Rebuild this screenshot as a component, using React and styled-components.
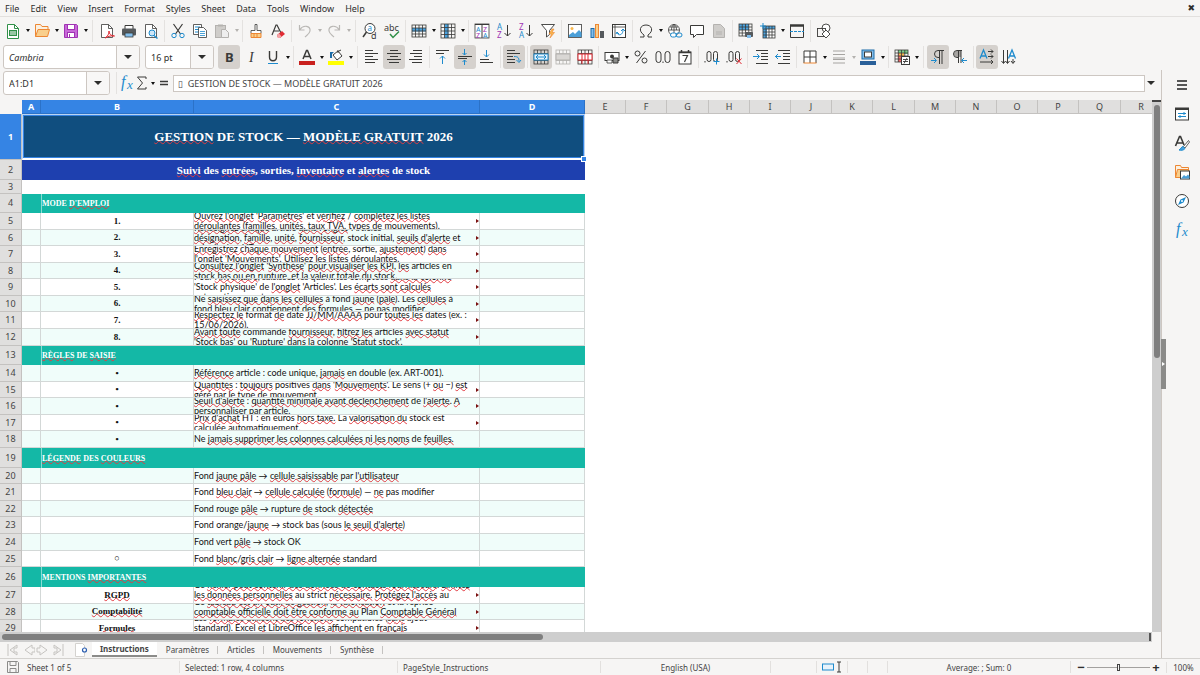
import React, { useState } from 'react'
import styled, { createGlobalStyle, css } from 'styled-components'

const DARK = '#3a3a38'
const BLUE = '#1e8bcd'
const ORANGE = '#ed8733'
const RED = '#e02b33'
const PURPLE = '#a033b3'
const GREEN = '#309048'

const menus = ['File', 'Edit', 'View', 'Insert', 'Format', 'Styles', 'Sheet', 'Data', 'Tools', 'Window', 'Help']

// text between ~ signs is flagged by the spell checker
const rows = [
  { n: 1, h: 46, kind: 'title', text: '~GESTION~ DE STOCK — ~MODÈLE GRATUIT~ 2026' },
  { n: 2, h: 20, kind: 'subtitle', text: '~Suivi~ des ~entrées~, sorties, ~inventaire~ et ~alertes~ de stock' },
  { n: 3, h: 14, kind: 'empty' },
  { n: 4, h: 19, kind: 'section', text: "MODE ~D'EMPLOI~" },
  { n: 5, h: 17, label: '1.', more: true, lines: ["~Ouvrez l'onglet~ '~Paramètres~' et ~vérifiez~ / ~complétez les listes~", '~déroulantes~ (~familles~, ~unités~, ~taux TVA~, ~types~ de ~mouvements~).'] },
  { n: 6, h: 16, label: '2.', more: true, lines: ["~Renseignez chaque~ article ~dans l'onglet~ 'Articles'", "~désignation~, ~famille~, ~unité~, ~fournisseur~, stock initial, ~seuils d'alerte~ et", "prix d'achat HT."] },
  { n: 7, h: 17, label: '3.', more: true, lines: ['~Enregistrez chaque mouvement~ (~entrée~, sortie, ~ajustement~) ~dans~', "~l'onglet~ '~Mouvements~'. ~Utilisez~ les ~listes déroulantes.~"] },
  { n: 8, h: 16, label: '4.', more: true, lines: ["~Consultez l'onglet~ '~Synthèse~' ~pour visualiser les KPI~, ~les~ articles en", 'stock ~bas ou~ en ~rupture~, et ~la valeur totale~ du stock.'] },
  { n: 9, h: 17, label: '5.', more: true, lines: ["Pour ~l'inventaire~, saisissez les quantités comptées ~dans la colonne~", "'Stock physique' de ~l'onglet~ 'Articles'. Les ~écarts sont calculés~", 'automatiquement.'] },
  { n: 10, h: 16, label: '6.', more: true, lines: ['Ne ~saisissez que dans les cellules~ à fond ~jaune~ (~pâle~). Les ~cellules~ à', 'fond bleu ~clair contiennent~ des ~formules~ — ne pas modifier.'] },
  { n: 11, h: 17, label: '7.', more: true, lines: ['~Respectez le~ format ~de~ date ~JJ/MM/AAAA~ pour ~toutes les~ dates (ex. :', '15/06/2026).'] },
  { n: 12, h: 17, label: '8.', more: true, lines: ['~Avant toute~ commande ~fournisseur~, ~filtrez les~ articles ~avec statut~', "'Stock bas' ~ou~ '~Rupture~' dans la ~colonne~ '~Statut~ stock'."] },
  { n: 13, h: 19, kind: 'section', text: '~RÈGLES~ DE ~SAISIE~' },
  { n: 14, h: 17, label: '•', lines: ['~Référence~ article : code unique, ~jamais~ en double (ex. ART-001).'] },
  { n: 15, h: 16, label: '•', more: true, lines: ["~Quantités~ : ~toujours~ positives ~dans~ '~Mouvements~'. Le sens (+ ~ou~ −) ~est~", '~géré~ par le type de ~mouvement.~'] },
  { n: 16, h: 17, label: '•', more: true, lines: ["~Seuil d'alerte~ : ~quantité minimale avant déclenchement~ de ~l'alerte~. ~À~", '~personnaliser~ par article.'] },
  { n: 17, h: 16, label: '•', more: true, lines: ["~Prix d'achat~ HT : en euros ~hors taxe.~ La ~valorisation du~ stock est", '~calculée automatiquement.~'] },
  { n: 18, h: 17, label: '•', lines: ['Ne ~jamais supprimer les colonnes calculées ni les noms~ de ~feuilles.~'] },
  { n: 19, h: 20, kind: 'section', text: '~LÉGENDE~ DES ~COULEURS~' },
  { n: 20, h: 16, lines: ["Fond ~jaune pâle~ → ~cellule saisissable~ par ~l'utilisateur~"] },
  { n: 21, h: 17, lines: ['Fond ~bleu clair~ → ~cellule calculée~ (~formule~) — ~ne~ pas modifier'] },
  { n: 22, h: 16, lines: ['Fond rouge ~pâle~ → rupture ~de~ stock ~détectée~'] },
  { n: 23, h: 17, lines: ["Fond orange/~jaune~ → stock bas (sous ~le seuil d'alerte~)"] },
  { n: 24, h: 17, lines: ['Fond vert ~pâle~ → stock OK'] },
  { n: 25, h: 16, label: '○', lines: ['Fond ~blanc~/~gris clair~ → ~ligne alternée~ standard'] },
  { n: 26, h: 20, kind: 'section', text: 'MENTIONS ~IMPORTANTES~' },
  { n: 27, h: 17, label: '~RGPD~', more: true, lines: ['Ce ~fichier peut contenir des données de contacts fournisseurs~. ~Limitez~', "~les données personnelles~ au strict ~nécessaire.~ ~Protégez l'accès~ au", ' '] },
  { n: 28, h: 16, label: '~Comptabilité~', more: true, lines: ["Ce ~tableau est un outil de gestion~, ~la valorisation~ et la reprise", '~comptable officielle doit être conforme au~ Plan ~Comptable Général~', ' '] },
  { n: 29, h: 17, label: '~Formules~', more: true, lines: ["Les ~formules utilisent des fonctions~ compatibles (~sans~ ajout", 'standard). Excel ~et~ LibreOffice ~les affichent~ en ~français~', ' '] },
]

const columns = [
  ['A', 19], ['B', 153], ['C', 286], ['D', 105], ['E', 41], ['F', 41], ['G', 42], ['H', 41], ['I', 41],
  ['J', 41], ['K', 41], ['L', 42], ['M', 41], ['N', 41], ['O', 41], ['P', 41], ['Q', 42], ['R', 41],
]

const Grid = ({ x = 1, y = 2, w = 14, h = 12, c = DARK, cols = 4, lines = 4 }) => (
  <g stroke={c} fill='none' strokeWidth='.8'>
    <rect x={x} y={y} width={w} height={h} />
    {Array.from({ length: cols - 1 }, (_, i) => (
      <path key={'c' + i} d={`M${x + ((i + 1) * w) / cols} ${y}v${h}`} />
    ))}
    {Array.from({ length: lines - 1 }, (_, i) => (
      <path key={'l' + i} d={`M${x} ${y + ((i + 1) * h) / lines}h${w}`} />
    ))}
  </g>
)

const AlignLines = ({ d }) => <path d={d} stroke={DARK} fill='none' />

const glyphs = {
  new: (
    <>
      <path d='M2.500 1.500h7l4 4v10h-11z' fill='#fff' stroke={GREEN} />
      <path d='M9.500 1.500v4h4' fill='none' stroke={GREEN} />
      <rect x='4' y='7' width='8' height='6' fill={GREEN} />
      <path d='M5 9h6M5 11h6' stroke='#fff' />
    </>
  ),
  open: (
    <>
      <path d='M1.500 13.500v-12h5l1.500 2h6v3' fill='#fbf0e0' stroke={ORANGE} />
      <path d='M1.500 13.500l2.500-7h11.500l-2 7z' fill='#f9cf8c' stroke={ORANGE} />
    </>
  ),
  save: (
    <>
      <path d='M1.500 1.500h12l1 1v12h-13z' fill='#c868d8' stroke={PURPLE} />
      <rect x='4.500' y='1.500' width='7' height='5' fill='#fff' stroke={PURPLE} />
      <rect x='4.500' y='9.500' width='7' height='5' fill='#fff' stroke={PURPLE} />
      <path d='M6.500 11v3' stroke={PURPLE} />
    </>
  ),
  pdf: (
    <>
      <path d='M2.500 1.500h7l4 4v9h-11z' fill='#fff' stroke={DARK} strokeWidth='.8' />
      <path d='M9.500 1.500v4h4' fill='none' stroke={DARK} strokeWidth='.8' />
      <path d='M6 15c3-2 4-4 4-7 0 3 2 5 5.500 5-3-.5-6 0-9.500 2z' fill='#fff' stroke={RED} />
    </>
  ),
  print: (
    <>
      <path d='M4 6V2.500h8V6' fill='#fff' stroke={DARK} />
      <rect x='1' y='5.500' width='14' height='7' rx='1' fill='#55595c' />
      <rect x='4' y='10' width='8' height='4' fill='#83beec' stroke={DARK} strokeWidth='.8' />
    </>
  ),
  preview: (
    <>
      <path d='M2.500 1.500h7l4 4v9h-11z' fill='#fff' stroke={DARK} strokeWidth='.8' />
      <path d='M9.500 1.500v4h4' fill='none' stroke={DARK} strokeWidth='.8' />
      <circle cx='9' cy='10' r='3' fill='#cfe6f7' stroke={BLUE} />
      <path d='M11 12.500l3.500 3' stroke={BLUE} strokeWidth='1.500' />
    </>
  ),
  cut: (
    <>
      <path d='M3.500 1l7 10M12.500 1l-7 10' stroke={DARK} strokeWidth='1.200' />
      <circle cx='4' cy='12.500' r='2.200' fill='none' stroke={BLUE} />
      <circle cx='12' cy='12.500' r='2.200' fill='none' stroke={BLUE} />
    </>
  ),
  copy: (
    <>
      <path d='M1.500 1.500h8v10h-8z' fill='#fff' stroke={DARK} strokeWidth='.8' />
      <path d='M3 4h5M3 6.500h4M3 9h4' stroke={BLUE} />
      <path d='M6.500 4.500h5l3 3v7h-8z' fill='#fff' stroke={DARK} strokeWidth='.8' />
      <path d='M8 8.500h5M8 10.500h5M8 12.500h5' stroke={BLUE} strokeWidth='.8' />
    </>
  ),
  paste: (
    <>
      <rect x='1.500' y='2.500' width='10' height='12' fill='#cfcdca' stroke='#b4b2af' />
      <path d='M4 3.500v-2h5v2z' fill='#b4b2af' />
      <path d='M7.500 6.500h4l3 3v5h-7z' fill='#eee' stroke='#b4b2af' />
    </>
  ),
  brush: (
    <>
      <path d='M7 1.500h2v6h4v3H3v-3h4z' fill='#fff' stroke={DARK} strokeWidth='.8' />
      <path d='M3 10.500h10v4H3z' fill='#f9cf8c' stroke={ORANGE} />
      <path d='M6 11v3M9 11v3' stroke={ORANGE} />
    </>
  ),
  clear: (
    <>
      <path d='M2 12L6 2h1l4 8M4 8h5' fill='none' stroke={DARK} strokeWidth='1.200' />
      <path d='M7 12l5-4 3 3-5 4H8z' fill={RED} />
      <path d='M7 12l2-1.500 2.500 3L10 15H8z' fill='#f4a3a6' />
    </>
  ),
  undo: <path d='M2.500 2v5h5M3 6.500c3-5 11-4 10 1.500-.5 3-3 4-5 6' fill='none' stroke='#bab8b5' strokeWidth='1.200' />,
  redo: <path d='M13.500 2v5h-5M13 6.500c-3-5-11-4-10 1.500.5 3 3 4 5 6' fill='none' stroke='#bab8b5' strokeWidth='1.200' />,
  find: (
    <>
      <circle cx='8' cy='5.500' r='5' fill='#fff' stroke={DARK} />
      <path d='M4.500 9L1 14' stroke={DARK} strokeWidth='1.500' />
      <text x='5.500' y='8' fontSize='8' fill={BLUE}>a</text>
      <text x='9' y='15.500' fontSize='9' fill={DARK}>d</text>
    </>
  ),
  spell: (
    <>
      <text x='0' y='7.500' fontSize='9' fill={DARK}>abc</text>
      <path d='M6 11l3 3.500 6-6' fill='none' stroke={GREEN} strokeWidth='1.500' />
    </>
  ),
  row: (
    <>
      <rect x='1' y='5' width='14' height='3.500' fill='#4aa3e0' />
      <Grid />
    </>
  ),
  column: (
    <>
      <rect x='4.500' y='1' width='4' height='14' fill='#4aa3e0' />
      <Grid y={1} h={14} />
    </>
  ),
  sort: (
    <>
      <rect x='1' y='1' width='14' height='14' fill='#fff' stroke={DARK} strokeWidth='.8' />
      <path d='M1 1.500h14M8 1v14' stroke={DARK} />
      <text x='2' y='8.500' fontSize='7' fill={BLUE}>A</text>
      <text x='2' y='14.500' fontSize='7' fill={PURPLE}>Z</text>
      <text x='9' y='8.500' fontSize='7' fill={PURPLE}>Z</text>
      <text x='9' y='14.500' fontSize='7' fill={BLUE}>A</text>
    </>
  ),
  asc: (
    <>
      <text x='1' y='7' fontSize='8' fill={BLUE}>A</text>
      <text x='1' y='15' fontSize='8' fill={PURPLE}>Z</text>
      <path d='M11.500 2v11M8.500 10l3 3 3-3' fill='none' stroke={DARK} />
    </>
  ),
  desc: (
    <>
      <text x='1' y='7' fontSize='8' fill={PURPLE}>Z</text>
      <text x='1' y='15' fontSize='8' fill={BLUE}>A</text>
      <path d='M11.500 2v11M8.500 10l3 3 3-3' fill='none' stroke={DARK} />
    </>
  ),
  filter: (
    <>
      <path d='M1.500 1.500h13l-5 6v4l-3 2.500v-6.500z' fill='#fff' stroke={DARK} strokeWidth='.9' />
      <path d='M12 6l-3 5h2.500l-1.500 4 4.500-5.500H12L14 6z' fill='#f9b84f' stroke={ORANGE} strokeWidth='.6' />
    </>
  ),
  image: (
    <>
      <rect x='1.500' y='1.500' width='13' height='13' fill='#fff' stroke={DARK} strokeWidth='.8' />
      <circle cx='5' cy='5.500' r='1.500' fill='#f9b84f' />
      <path d='M2 14v-2l4-3 2 2 4-4 2.500 2.500V14z' fill='#4a9fd8' />
    </>
  ),
  chart: (
    <>
      <rect x='2' y='5.500' width='3' height='9' fill='#83beec' stroke='#1c6ca8' />
      <rect x='6.500' y='1.500' width='3' height='13' fill='#f9cf8c' stroke={ORANGE} />
      <rect x='11' y='8' width='4' height='7' fill='#55595c' />
    </>
  ),
  pivot: (
    <>
      <rect x='1.500' y='1.500' width='13' height='13' fill='#fff' stroke={DARK} />
      <path d='M1.500 4h13M4 1.500v13' stroke={DARK} strokeWidth='.8' />
      <path d='M6 9c0 4 6 4 6-2M10 8l2-2 2 2M8 11l-2-2-1 2' fill='none' stroke={BLUE} />
    </>
  ),
  omega: <path d='M2 14h4v-2C0 8 2 2 8 2s8 6 2 10v2h4' fill='none' stroke={DARK} />,
  link: (
    <>
      <circle cx='7' cy='7' r='5.500' fill='#fff' stroke={DARK} strokeWidth='.8' />
      <path d='M1.500 7h11M7 1.500v11M3 4h8M4.500 7c0-3 1-5 2.500-5.500 1.500.5 2.500 2.500 2.500 5.500' fill='none' stroke={DARK} strokeWidth='.8' />
      <rect x='3.500' y='10' width='6' height='4' rx='2' fill='#fff' stroke={BLUE} />
      <rect x='9' y='10' width='6' height='4' rx='2' fill='none' stroke={BLUE} />
    </>
  ),
  comment: <path d='M1.500 2.500h13v9h-7l-3 3v-3h-3z' fill='#fff' stroke={DARK} />,
  headers: <path d='M2.500 1.500h7l4 4v9h-11zM5 9h6M5 11h6' fill='#cfcdca' stroke='#b4b2af' />,
  printarea: (
    <>
      <rect x='1' y='1' width='10' height='6' fill='#4aa3e0' />
      <Grid y={1} w={13} />
      <rect x='7' y='9' width='8' height='5' rx='1' fill='#55595c' />
      <rect x='9' y='12' width='4' height='3' fill='#83beec' />
    </>
  ),
  freeze: (
    <>
      <rect x='3' y='3' width='12' height='12' fill='#fff' />
      <path d='M3 3h12v3H7v9H3z' fill='#4aa3e0' />
      <Grid x={3} y={3} w={12} />
      <path d='M3 0v6M0 3h6' stroke={BLUE} />
    </>
  ),
  splitwin: (
    <>
      <path d='M1.500 2.500h13v12h-13z' fill='none' stroke={DARK} />
      <path d='M1 2.500h14' stroke={DARK} strokeWidth='2.500' />
      <path d='M1 8.500h14' stroke={BLUE} strokeDasharray='3 1' />
    </>
  ),
  shapes: (
    <>
      <circle cx='10' cy='5' r='4' fill='#fff' stroke={DARK} strokeWidth='.9' />
      <rect x='1.500' y='5.500' width='8' height='8' fill='none' stroke={DARK} strokeWidth='.9' />
      <path d='M10 7l4 4-4 4-4-4z' fill='#fff' stroke={DARK} strokeWidth='.9' />
    </>
  ),
  bold: <text x='4' y='13' fontSize='13' fontWeight='700' fill={DARK}>B</text>,
  italic: <text x='6' y='13' fontSize='14' fontStyle='italic' fontFamily='Liberation Serif, serif' fill={DARK}>I</text>,
  underline: (
    <>
      <path d='M4.500 2v6c0 5 7 5 7 0V2' fill='none' stroke={DARK} strokeWidth='1.400' />
      <path d='M3 14.500h10' stroke={BLUE} />
    </>
  ),
  fontcolor: (
    <>
      <path d='M4 10L7.500 1.500h1L12 10M5.500 7.500h5' fill='none' stroke={DARK} strokeWidth='1.500' />
      <rect x='0' y='12' width='16' height='4' fill='#c9211e' />
    </>
  ),
  highlight: (
    <>
      <path d='M2 3h4l-2 2v4H2z' fill='#1c6ca8' />
      <path d='M5 6l5-4 4 5-5 4z' fill='#fff' stroke={DARK} />
      <path d='M10 4V1M11 2l2-1' stroke={DARK} />
      <rect x='0' y='12' width='16' height='4' fill='#ffff00' />
    </>
  ),
  left: <AlignLines d='M1 1.500h8M1 4.500h13M1 7.500h8M1 10.500h13M1 13.500h10' />,
  center: <AlignLines d='M4 1.500h8M1 4.500h14M4 7.500h8M1 10.500h14M3 13.500h10' />,
  right: <AlignLines d='M5 1.500h9M2 4.500h12M6 7.500h8M1 10.500h13M4 13.500h10' />,
  top: (
    <>
      <AlignLines d='M1 1.500h13M1 4.500h8' />
      <path d='M7.500 15V7M5 9.500l2.500-2.500 2.500 2.500' fill='none' stroke={BLUE} />
    </>
  ),
  middle: (
    <>
      <AlignLines d='M1 7.500h14M1 9.500h9' />
      <path d='M7.500 0v6M5.500 4l2 2 2-2M7.500 16v-5M5.500 13l2-2 2 2' fill='none' stroke={BLUE} />
    </>
  ),
  bottom: (
    <>
      <AlignLines d='M1 10.500h9M1 13.500h13' />
      <path d='M7.500 1v7M5 5.500L7.500 8 10 5.500' fill='none' stroke={BLUE} />
    </>
  ),
  wrap: (
    <>
      <AlignLines d='M1 1.500h8M1 4.500h13M1 7.500h6M1 10.500h8M1 13.500h8' />
      <path d='M8 7.500c4 0 5 1 5 5M10.500 11l2.500 2.500L15 11' fill='none' stroke={BLUE} />
    </>
  ),
  merge: (
    <>
      <Grid y={1} h={14} />
      <rect x='1' y='5' width='14' height='6' fill='#e8f3fb' stroke={BLUE} />
      <path d='M3 8h10M5 6L3 8l2 2M11 6l2 2-2 2' fill='none' stroke={BLUE} />
    </>
  ),
  unmerge: (
    <>
      <Grid y={1} h={14} c='#b4b2af' />
      <rect x='1' y='5' width='14' height='6' fill='#d9d7d4' stroke='#b4b2af' />
    </>
  ),
  splitcells: (
    <>
      <Grid y={1} h={14} />
      <rect x='1' y='5' width='14' height='6' fill='#fff' stroke={RED} />
      <path d='M5 5v10M8 5v6M11 5v10' stroke={RED} />
    </>
  ),
  currency: (
    <>
      <rect x='1' y='3.500' width='14' height='8' fill='#fff' stroke={DARK} />
      <circle cx='8' cy='7.500' r='2' fill={DARK} />
      <path d='M9 9h5v5H9z' fill='#8b8b89' stroke={DARK} />
      <path d='M3 11h5v3H3z' fill='#fff' stroke={DARK} strokeWidth='.8' />
    </>
  ),
  percent: (
    <>
      <circle cx='4.500' cy='4.500' r='2.500' fill='none' stroke={DARK} />
      <circle cx='11.500' cy='11.500' r='2.500' fill='none' stroke={DARK} />
      <path d='M12.500 2l-9 12' stroke={DARK} />
    </>
  ),
  number: (
    <g fill='none' stroke={DARK}>
      <rect x='1' y='2.500' width='5' height='11' rx='2.500' />
      <rect x='10' y='2.500' width='5' height='11' rx='2.500' />
      <path d='M8 12.500v1.500' />
    </g>
  ),
  date: (
    <>
      <rect x='2' y='3' width='12' height='12' fill='#fff' stroke={DARK} />
      <path d='M2 3.500h12M4.500 1v3M11.500 1v3' stroke={DARK} strokeWidth='1.500' />
      <path d='M5.500 6.500h5l-3 6.500' fill='none' stroke={DARK} strokeWidth='1.200' />
    </>
  ),
  adddec: (
    <>
      <g fill='none' stroke={DARK}>
        <path d='M1 12v1.500' />
        <rect x='3' y='2.500' width='4' height='10' rx='2' />
        <rect x='9.500' y='2.500' width='4' height='10' rx='2' />
      </g>
      <path d='M12.500 9.500v6M9.500 12.500h6' stroke={BLUE} />
    </>
  ),
  deldec: (
    <>
      <g fill='none' stroke={DARK}>
        <path d='M1 12v1.500' />
        <rect x='3' y='2.500' width='4' height='10' rx='2' />
        <rect x='9.500' y='2.500' width='4' height='10' rx='2' />
      </g>
      <path d='M10.500 9.500l5 5.500M15.500 9.500l-5 5.500' stroke={RED} />
    </>
  ),
  indent: (
    <>
      <AlignLines d='M3 1.500h12M8 4.500h7M8 7.500h7M8 10.500h7M3 14.500h12' />
      <path d='M0 7.500h6M4 5l2.500 2.500L4 10' fill='none' stroke={BLUE} />
    </>
  ),
  outdent: (
    <>
      <AlignLines d='M3 1.500h12M8 4.500h7M8 7.500h7M8 10.500h7M3 14.500h12' />
      <path d='M0 7.500h6M3 5L.5 7.500 3 10' fill='none' stroke={BLUE} />
    </>
  ),
  borders: (
    <>
      <rect x='2' y='2' width='12' height='12' fill='#fff' />
      <path d='M2 14V2h12v12M8 2v12M2 8h12' fill='none' stroke={DARK} />
      <path d='M1.500 14h13' stroke={ORANGE} />
    </>
  ),
  borderstyle: <path d='M2 2h12M2 5.500h12M2 9h12M2 10.500h12M2 14h12' stroke='#a6a4a1' />,
  bordercolor: (
    <>
      <rect x='2' y='1' width='12' height='9' fill='#83beec' stroke='#1c6ca8' />
      <rect x='4.500' y='3' width='7' height='5' fill='#fff' stroke={DARK} />
      <rect x='0' y='12' width='16' height='4' fill='#2a6099' />
    </>
  ),
  conditional: (
    <>
      <rect x='4' y='1' width='10' height='4' fill='#7ccf8b' />
      <rect x='4' y='4' width='5' height='9' fill='#f06a6a' />
      <rect x='5' y='4' width='5' height='3' fill='#f9b84f' />
      <Grid y={1} w={13} h={12} />
      <rect x='7.500' y='7.500' width='8' height='8' fill='#fff' stroke={DARK} />
      <path d='M9 10.500h5M9 12.500h5M13 9l-3 5.500' stroke={DARK} strokeWidth='.9' />
    </>
  ),
  ltr: (
    <>
      <path d='M14 1.500H8a3.500 3.500 0 000 7h1M9.500 1.500V15M12 1.500V15' fill='none' stroke={DARK} />
      <path d='M1 11.500h5M4 9l2.500 2.500L4 14' fill='none' stroke={BLUE} />
    </>
  ),
  rtl: (
    <>
      <path d='M5 2a3 3 0 000 6h4V2z' fill='#a6a4a1' />
      <path d='M10 1.500H5a3.500 3.500 0 000 7h1M6.500 1.500V14M9 1.500V14' fill='none' stroke={DARK} />
      <path d='M15 11.500h-5M12 9l-2.500 2.500L12 14' fill='none' stroke={BLUE} />
    </>
  ),
  horizontal: (
    <>
      <path d='M1 9.500L4.500 1 8 9.500M2 7h5' fill='none' stroke={BLUE} strokeWidth='1.300' />
      <path d='M9 2.500h5M9 7.500h5M1 13h13M12 .5l2 2-2 2M12 5.500l2 2-2 2M12 11l2 2-2 2' fill='none' stroke={DARK} />
    </>
  ),
  vertical: (
    <>
      <path d='M7.500 9.500L11 1l3.500 8.500M8.500 7h5' fill='none' stroke={BLUE} strokeWidth='1.300' />
      <path d='M2.500 1v13M6.500 1v13M.5 12l2 2.500 2-2.500M4.500 12l2 2.500 2-2.500M12 10v4M10 12l2 2.500 2-2.500' fill='none' stroke={DARK} />
    </>
  ),
  fx: (
    <>
      <text x='2' y='12' fontSize='16' fontStyle='italic' fontFamily='Liberation Serif, serif' fill={BLUE}>f</text>
      <text x='8' y='14' fontSize='13' fontStyle='italic' fontFamily='Liberation Serif, serif' fill={BLUE}>x</text>
    </>
  ),
  sigma: <path d='M12 4V2H3.500l5 6-5 6H12v-2' fill='none' stroke={DARK} />,
  equals: <path d='M4 6.500h8M4 9.500h8' stroke={DARK} strokeWidth='1.400' />,
  menu: <path d='M3 4h10M3 8h10M3 12h10' stroke='#222' strokeWidth='1.300' />,
  properties: (
    <>
      <rect x='1.500' y='2' width='13' height='12' fill='#fff' stroke={DARK} />
      <path d='M1.500 3h13' stroke={DARK} strokeWidth='2' />
      <path d='M4 7.500h8M4 10.500h8M10 6v3M6 9v3' stroke={BLUE} />
    </>
  ),
  styles: (
    <>
      <path d='M1.500 11L5.500 1.500h1L10 10M3 8h6' fill='none' stroke={DARK} strokeWidth='1.600' />
      <path d='M14.500 5.500l-5 6 1.500 1.500 4.500-6z' fill='#fff' stroke={DARK} strokeWidth='.8' />
      <path d='M5 15c2-1 2-3 4-3.500l2 2C9.500 15.500 7 15.500 5 15z' fill='#4aa3e0' stroke={BLUE} />
    </>
  ),
  gallery: (
    <>
      <path d='M1.500 13.500v-12h5l1 2h7v3' fill='#fbf0e0' stroke={ORANGE} />
      <path d='M1.500 13.500l2-8h11v8z' fill='#f9cf8c' stroke={ORANGE} />
      <rect x='6.500' y='7' width='9' height='8' fill='#fff' stroke={DARK} />
      <path d='M7 14.500l3-3.500 2 1.500 2-2 1.500 2v2z' fill='#4a9fd8' />
    </>
  ),
  navigator: (
    <>
      <circle cx='8' cy='8' r='6.500' fill='#fff' stroke={DARK} />
      <path d='M12 4L9.500 9.500 4 12l2.500-5.500z' fill={BLUE} />
      <circle cx='8' cy='8' r='1' fill='#fff' />
    </>
  ),
  floppy: (
    <g fill='none' stroke='#8b8b89'>
      <path d='M2.500 2.500h10l1 1v10h-11zM5 2.500v4h6v-4M5 13.500v-4h6v4' />
    </g>
  ),
  addsheet: (
    <>
      <path d='M2.500 14.500v-13h7l2 2v11z' fill='#fff' stroke='#d4d2cf' />
      <circle cx='11.500' cy='8' r='2' fill='#fff' stroke='#2a5db0' strokeWidth='1.200' />
    </>
  ),
}

const standardBar = [
  'new+', 'open+', 'save+', '||', 'pdf', 'print', 'preview', '|', 'cut', 'copy', 'paste-', '|', 'brush', 'clear', '|',
  'undo-', 'redo-', '||', 'find', 'spell', '|', 'row+', 'column+', '|', 'sort', 'asc', 'desc', 'filter', '|', 'image',
  'chart', 'pivot', '|', 'omega+', 'link', 'comment', 'headers', '|', 'printarea', 'freeze+', 'splitwin', '|', 'shapes',
]
const formattingBar = [
  'bold*', 'italic', 'underline+', '|', 'fontcolor+', 'highlight+', '||', 'left', 'center*', 'right', '|', 'top',
  'middle*', 'bottom', '|', 'wrap*', '|', 'merge*', 'unmerge', 'splitcells', '|', 'currency+', 'percent', 'number',
  'date', '|', 'adddec', 'deldec', '|', 'indent', 'outdent', '|', 'borders+', 'borderstyle-', 'bordercolor+', '|',
  'conditional+', '||', 'ltr*', 'rtl', '|', 'horizontal*', 'vertical',
]

const Icon = ({ name }) => (
  <IconSvg viewBox='0 0 16 16' aria-hidden='true'>
    {glyphs[name]}
  </IconSvg>
)

// suffixes: + menu arrow, - disabled menu arrow, * pressed
const Tools = ({ items }) =>
  items.map((item, i) => {
    if (item === '|' || item === '||') return <Separator key={i} $wide={item === '||'} />
    const name = item.replace(/[+*-]$/, '')
    const flag = item.slice(name.length)
    return (
      <React.Fragment key={i}>
        <ToolButton type='button' aria-label={name} $pressed={flag === '*'} disabled={flag === '-'}>
          <Icon name={name} />
        </ToolButton>
        {(flag === '+' || flag === '-') && (
          <ArrowButton type='button' aria-label={name + ' menu'} disabled={flag === '-'}>
            <Arrow />
          </ArrowButton>
        )}
      </React.Fragment>
    )
  })

const Spelled = ({ text }) => text.split('~').map((part, i) => (i % 2 ? <Typo key={i}>{part}</Typo> : part))

const Row = ({ row }) => {
  const { n, h, kind, text, label = '', lines = [], more } = row
  return (
    <tr>
      <RowHead scope='row' $active={n === 1} style={{ height: h }}>
        {n}
      </RowHead>
      {kind === 'title' && (
        <TitleCell colSpan={4}>
          <Spelled text={text} />
          <FillHandle />
        </TitleCell>
      )}
      {kind === 'subtitle' && (
        <SubtitleCell colSpan={4}>
          <Spelled text={text} />
        </SubtitleCell>
      )}
      {kind === 'empty' && <EmptyCell colSpan={4} />}
      {kind === 'section' && (
        <>
          <SectionCell />
          <SectionCell colSpan={3}>
            <Spelled text={text} />
          </SectionCell>
        </>
      )}
      {!kind && (
        <>
          <Cell $even={n % 2 === 0} />
          <LabelCell $even={n % 2 === 0}>
            <Spelled text={label} />
          </LabelCell>
          <Cell $even={n % 2 === 0}>
            <Clip style={{ height: h - 1 }}>
              {lines.map((line, i) => (
                <Line key={i}>
                  <Spelled text={line} />
                </Line>
              ))}
            </Clip>
            {more && <MoreMark />}
          </Cell>
          <Cell $even={n % 2 === 0} />
        </>
      )}
      <EmptyCell colSpan={14} />
    </tr>
  )
}

const App = () => {
  const [tab, setTab] = useState('Instructions')
  const [zoom, setZoom] = useState(100)

  return (
    <>
      <GlobalStyle />
      <Window>
        <MenuBar>
          {menus.map(m => (
            <MenuItem key={m} type='button'>{m}</MenuItem>
          ))}
          <CloseButton type='button' aria-label='Close'>✖</CloseButton>
        </MenuBar>
        <Toolbar>
          <Tools items={standardBar} />
        </Toolbar>
        <FormatToolbar>
          <Combo $width={137}>
            <ComboInput aria-label='Font name' defaultValue='Cambria' $italic />
            <ComboButton type='button' aria-label='Font list'><Arrow $big /></ComboButton>
          </Combo>
          <Combo $width={69}>
            <ComboInput aria-label='Font size' defaultValue='16 pt' />
            <ComboButton type='button' aria-label='Size list'><Arrow $big /></ComboButton>
          </Combo>
          <Tools items={formattingBar} />
        </FormatToolbar>
        <Body>
          <Main>
            <FormulaBar>
              <Combo $width={107}>
                <ComboInput aria-label='Name box' defaultValue='A1:D1' />
                <ComboButton type='button' aria-label='Name list'><Arrow $big /></ComboButton>
              </Combo>
              <FormulaTools>
                <Separator />
                <SlimButton type='button' aria-label='Function wizard'><Icon name='fx' /></SlimButton>
                <SlimButton type='button' aria-label='Select function'><Icon name='sigma' /></SlimButton>
                <ArrowButton type='button' aria-label='Function menu'><Arrow /></ArrowButton>
                <SlimButton type='button' aria-label='Formula'><Icon name='equals' /></SlimButton>
              </FormulaTools>
              <FormulaInput aria-label='Input line' defaultValue='▯  GESTION DE STOCK — MODÈLE GRATUIT 2026' />
              <ExpandButton type='button' aria-label='Expand formula bar'><Arrow $big /></ExpandButton>
            </FormulaBar>
            <SheetArea>
              <SheetView>
                <SheetTable>
                  <colgroup>
                    <col style={{ width: 22 }} />
                    {columns.map(([name, width]) => (
                      <col key={name} style={{ width }} />
                    ))}
                  </colgroup>
                  <thead>
                    <tr>
                      <Corner />
                      {columns.map(([name], i) => (
                        <ColHead key={name} scope='col' $active={i < 4}>{name}</ColHead>
                      ))}
                    </tr>
                  </thead>
                  <tbody>
                    {rows.map(row => (
                      <Row key={row.n} row={row} />
                    ))}
                  </tbody>
                </SheetTable>
              </SheetView>
              <VScroll><VThumb /></VScroll>
            </SheetArea>
            <HScroll><HThumb /><HEnd /></HScroll>
            <TabBar>
              <TabNav>
                {['M2 1v12M11 2L4 7l7 5v-3H8V5h3z', 'M11 2L4 7l7 5v-3h3V5h-3z', 'M4 2l7 5-7 5V9H1V5h3z', 'M12 1v12M3 2l7 5-7 5V9h3V5H3z'].map(d => (
                  <NavButton key={d} type='button' aria-label='Scroll tabs'>
                    <svg viewBox='0 0 14 14' width='14' height='14'>
                      <path d={d} fill='none' stroke='#c6c4c1' />
                    </svg>
                  </NavButton>
                ))}
              </TabNav>
              <AddButton type='button' aria-label='Add sheet'><Icon name='addsheet' /></AddButton>
              {['Instructions', 'Paramètres', 'Articles', 'Mouvements', 'Synthèse'].map(t => (
                <Tab key={t} type='button' $active={t === tab} onClick={() => setTab(t)}>{t}</Tab>
              ))}
            </TabBar>
          </Main>
          <Sidebar>
            {['menu', 'properties', 'styles', 'gallery', 'navigator', 'fx'].map(name => (
              <ToolButton key={name} type='button' aria-label={name}><Icon name={name} /></ToolButton>
            ))}
            <SidebarHandle type='button' aria-label='Hide sidebar' />
          </Sidebar>
        </Body>
        <StatusBar>
          <Status $basis={180}>
            <Icon name='floppy' />
            <StatusText>Sheet 1 of 5</StatusText>
          </Status>
          <Status $basis={218}>Selected: 1 row, 4 columns</Status>
          <Status $basis={203}>PageStyle_Instructions</Status>
          <Status $basis={170} $center>English (USA)</Status>
          <Status $basis={46} />
          <Status $basis={31} $center>
            <svg width='20' height='14' viewBox='0 0 20 14'>
              <rect x='.5' y='4' width='11' height='6' fill='#e8f3fb' stroke={BLUE} />
              <path d='M15 2h4M17 2v10M15 12h4' stroke={DARK} fill='none' />
            </svg>
          </Status>
          <Status $basis={20} />
          <Status $basis={20} />
          <Status $basis={183} $center>Average: ; Sum: 0</Status>
          <ZoomBox>
            <ZoomButton type='button' aria-label='Zoom out' onClick={() => setZoom(zoom - 5)}>−</ZoomButton>
            <ZoomRange type='range' aria-label='Zoom' min='20' max='180' value={zoom} onChange={e => setZoom(+e.target.value)} />
            <ZoomButton type='button' aria-label='Zoom in' onClick={() => setZoom(zoom + 5)}>+</ZoomButton>
          </ZoomBox>
          <ZoomValue>{zoom}%</ZoomValue>
        </StatusBar>
      </Window>
    </>
  )
}

const GlobalStyle = createGlobalStyle`
  * { box-sizing: border-box; }
  body { margin: 0; }
  body, button, input {
    font-family: 'Noto Sans', 'Open Sans', sans-serif;
    font-size: 9px;
    color: #2e2e2d;
  }
  button {
    display: flex;
    align-items: center;
    justify-content: center;
    padding: 0;
    border: 0;
    background: none;
    flex: none;
  }
`
const Window = styled.div`
  display: flex;
  flex-direction: column;
  height: 100vh;
  overflow: hidden;
  background: #f6f5f4;
`
const MenuBar = styled.nav`
  display: flex;
  align-items: center;
  gap: 1px;
  flex: none;
  height: 17px;
  padding-right: 5px;
  border-bottom: 1px solid #e2e0de;
`
const MenuItem = styled.button`
  padding: 0 5px;
`
const CloseButton = styled.button`
  margin-left: auto;
  font-family: 'DejaVu Sans', sans-serif;
`
const Toolbar = styled.div`
  display: flex;
  align-items: center;
  flex: none;
  height: 27px;
  padding-left: 2px;
`
const FormatToolbar = styled(Toolbar)`
  height: 26px;
`
const ToolButton = styled.button`
  width: 22px;
  height: 24px;
  border-radius: 3px;
  ${p => p.$pressed && css`
    background: #d5d1cd;
  `}
`
const ArrowButton = styled.button`
  width: 7px;
  height: 24px;
  color: #111;
  &:disabled {
    color: #b4b2af;
  }
`
const Arrow = styled.span`
  border: solid transparent;
  border-width: ${p => (p.$big ? '4px 4px 0' : '3px 2px 0')};
  border-top-color: currentColor;
`
const IconSvg = styled.svg`
  display: block;
  flex: none;
  width: 16px;
  height: 16px;
  overflow: visible;
  font-family: 'Noto Sans', sans-serif;
`
const Separator = styled.span`
  flex: none;
  width: 1px;
  height: 22px;
  margin: 0 ${p => (p.$wide ? 3 : 2)}px;
  background: #e4e2e0;
`
const Combo = styled.div`
  display: flex;
  flex: none;
  width: ${p => p.$width}px;
  height: 24px;
  margin: 0 4px 0 1px;
  border: 1px solid #cdc7c2;
  border-radius: 3px;
  background: #fff;
  overflow: hidden;
`
const ComboInput = styled.input`
  flex: 1;
  min-width: 0;
  padding: 0 5px;
  border: 0;
  background: none;
  outline: none;
  font-style: ${p => (p.$italic ? 'italic' : 'normal')};
`
const ComboButton = styled.button`
  width: 23px;
  border-left: 1px solid #cdc7c2;
  background: #f8f7f6;
`
const Body = styled.div`
  display: flex;
  flex: 1;
  min-height: 0;
`
const Main = styled.div`
  display: flex;
  flex-direction: column;
  flex: 1;
  min-width: 0;
`
const FormulaBar = styled.div`
  display: flex;
  align-items: center;
  flex: none;
  height: 30px;
  padding: 0 4px 4px 2px;
`
const FormulaTools = styled.div`
  display: flex;
  flex: none;
  align-items: center;
  width: 59px;
`
const SlimButton = styled.button`
  width: 15px;
  height: 24px;
`
const FormulaInput = styled.input`
  flex: 1;
  min-width: 0;
  height: 17px;
  padding: 0 4px;
  border: 1px solid #cdc7c2;
  outline: none;
  color: #444;
`
const ExpandButton = styled.button`
  width: 12px;
`
const SheetArea = styled.div`
  display: flex;
  flex: 1;
  min-height: 0;
`
const SheetView = styled.div`
  flex: 1;
  min-width: 0;
  overflow: hidden;
  background: #fff;
`
const SheetTable = styled.table`
  table-layout: fixed;
  width: 0;
  border-spacing: 0;
  line-height: 10px;
  th, td {
    padding: 0;
  }
`
const Corner = styled.td`
  height: 14px;
  background: #f6f5f4;
`
const ColHead = styled.th`
  height: 14px;
  border-right: 1px solid ${p => (p.$active ? '#2b72c8' : '#c4c2c0')};
  border-bottom: 1px solid ${p => (p.$active ? '#2b72c8' : '#c4c2c0')};
  background: ${p => (p.$active ? '#3584e4' : '#e0dfde')};
  color: ${p => (p.$active ? '#fff' : '#444')};
  font-size: 9px;
  font-weight: ${p => (p.$active ? 700 : 400)};
`
const RowHead = styled.th`
  border-right: 1px solid #c4c2c0;
  border-bottom: 1px solid #c4c2c0;
  background: ${p => (p.$active ? '#3584e4' : '#e0dfde')};
  color: ${p => (p.$active ? '#fff' : '#444')};
  font-size: 9px;
  font-weight: ${p => (p.$active ? 700 : 400)};
`
const serif = "'Liberation Serif', serif"
const TitleCell = styled.td`
  position: relative;
  border: 1px solid #b9d4f3;
  border-bottom: 2px solid #fff;
  background: #104e7f;
  box-shadow: inset 0 0 0 1px #3584e4;
  color: #fff;
  text-align: center;
  font: bold 13px/18px ${serif};
`
const FillHandle = styled.span`
  position: absolute;
  right: -2px;
  bottom: -3px;
  width: 4px;
  height: 4px;
  background: #3584e4;
  box-shadow: 0 0 0 1px #fff;
`
const SubtitleCell = styled.td`
  background: #1e40af;
  color: #fff;
  text-align: center;
  font: bold 11px/12px ${serif};
`
const EmptyCell = styled.td`
  background: #fff;
`
const SectionCell = styled.td`
  background: #14b8a6;
  color: #fff;
  font: bold 8px/11px ${serif};
  & + & {
    border-left: 1px solid #8adbd2;
  }
`
const Cell = styled.td`
  position: relative;
  border-right: 1px solid #d3d8d7;
  border-bottom: 1px solid #d3d8d7;
  background: ${p => (p.$even ? '#f0fdfa' : '#fff')};
  color: #111;
`
const LabelCell = styled(Cell)`
  text-align: center;
  font: bold 9px/11px ${serif};
`
const Clip = styled.div`
  display: flex;
  flex-direction: column;
  justify-content: center;
  overflow: hidden;
`
const Line = styled.div`
  flex: none;
  height: 10px;
  font: 9px/10px Lato, sans-serif;
  white-space: pre;
`
const Typo = styled.span`
  text-decoration: underline wavy #e23b42 1px;
  text-decoration-skip-ink: none;
  text-underline-offset: -1px;
`
const MoreMark = styled.span`
  position: absolute;
  right: 0;
  top: 6px;
  border: solid transparent;
  border-width: 2px 0 2px 3px;
  border-left-color: #7a1010;
`
const VScroll = styled.div`
  flex: none;
  width: 9px;
  padding: 3px 1px 0 2px;
  border-top: 2px solid #444;
  background: #cecece;
`
const VThumb = styled.div`
  height: 48%;
  border-radius: 3px;
  background: #7f7f7f;
`
const HScroll = styled.div`
  display: flex;
  align-items: center;
  flex: none;
  height: 10px;
  margin-right: 9px;
  padding-left: 2px;
  background: #cecece;
`
const HThumb = styled.div`
  width: 47%;
  height: 6px;
  border-radius: 3px;
  background: #7f7f7f;
`
const HEnd = styled.div`
  width: 2px;
  height: 8px;
  margin: 0 1px 0 auto;
  background: #555;
`
const TabBar = styled.div`
  display: flex;
  flex: none;
  height: 16px;
`
const TabNav = styled.div`
  display: flex;
  padding: 0 5px;
`
const NavButton = styled.button`
  width: 15px;
`
const AddButton = styled.button`
  width: 22px;
`
const Tab = styled.button`
  position: relative;
  height: 15px;
  padding: 0 9px;
  font-size: 8px;
  color: #444;
  ${p => p.$active
    ? css`
        padding: 0 8px;
        border-bottom: 2px solid #8b8b89;
        background: #fff;
        font-weight: 700;
      `
    : css`
        &::after {
          content: '';
          position: absolute;
          right: 0;
          top: 4px;
          height: 8px;
          border-right: 1px solid #c4c2c0;
        }
      `}
`
const Sidebar = styled.aside`
  position: relative;
  display: flex;
  flex-direction: column;
  align-items: center;
  gap: 5px;
  flex: none;
  width: 39px;
  padding: 3px 0 0 2px;
  border-left: 1px solid #cdc7c2;
`
const SidebarHandle = styled.button`
  position: absolute;
  left: -1px;
  top: 50%;
  width: 5px;
  height: 50px;
  margin-top: -25px;
  background: #8b8b89;
  &::after {
    content: '';
    border: solid transparent;
    border-width: 2px 0 2px 3px;
    border-left-color: #fff;
  }
`
const StatusBar = styled.footer`
  display: flex;
  align-items: center;
  flex: none;
  height: 17px;
  border-top: 1px solid #d4d2cf;
  font-size: 8px;
  color: #444;
`
const Status = styled.div`
  display: flex;
  align-items: center;
  justify-content: ${p => (p.$center ? 'center' : 'flex-start')};
  flex: ${p => `${p.$basis} 1 ${p.$basis}px`};
  min-width: 0;
  height: 12px;
  padding: 0 5px;
  border-right: 1px solid #e2e0de;
  white-space: nowrap;
`
const StatusText = styled.span`
  margin-left: 6px;
`
const ZoomBox = styled.div`
  display: flex;
  align-items: center;
  flex: none;
  width: 95px;
  padding: 0 5px;
`
const ZoomButton = styled.button`
  width: 10px;
  font-size: 13px;
  font-weight: 700;
  line-height: 12px;
`
const ZoomRange = styled.input`
  flex: 1;
  min-width: 0;
  height: 10px;
  margin: 0 1px;
  appearance: none;
  background: linear-gradient(#a3a19f, #a3a19f) center / 100% 1px no-repeat;
  &::-webkit-slider-thumb {
    appearance: none;
    width: 3px;
    height: 7px;
    border: 1px solid #444;
    background: #f6f5f4;
  }
`
const ZoomValue = styled.span`
  flex: none;
  width: 34px;
  border-left: 1px solid #e2e0de;
  text-align: center;
`
export default App
